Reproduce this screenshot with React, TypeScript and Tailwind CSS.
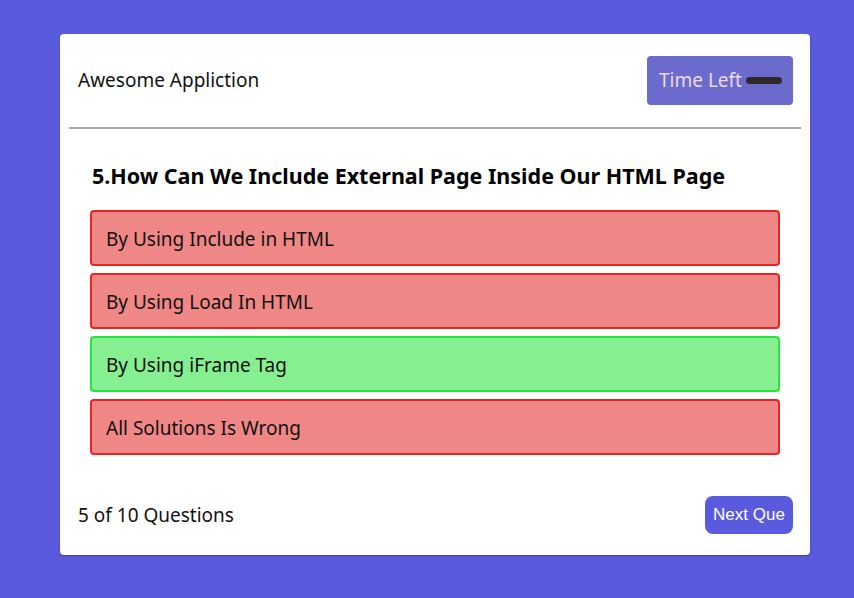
import React from "react";

const options = [
  { text: "By Using Include in HTML", correct: false },
  { text: "By Using Load In HTML", correct: false },
  { text: "By Using iFrame Tag", correct: true },
  { text: "All Solutions Is Wrong", correct: false },
];

export default function App() {
  return (
    <div className="min-h-screen bg-[#5a5ade] flex justify-center pt-[34px] pl-[16px] font-['Noto_Sans',sans-serif]">
      <div className="w-[750px] h-[521px] bg-white rounded-[4px] shadow-[0_1px_2px_rgba(0,0,0,0.3)] flex flex-col">
        <div className="h-[93px] flex items-center justify-between pl-[18px] pr-[17px]">
          <span className="text-[19px] text-[#111]">Awesome Appliction</span>
          <div className="h-[49px] w-[146px] bg-[#6b6bce] rounded-[4px] flex items-center pl-[12px] gap-[4px] whitespace-nowrap">
            <span className="text-[19px] text-[#eed8e6]">Time Left</span>
            <span className="w-[36px] h-[7px] shrink-0 rounded-full bg-[#2e2a2c]" />
          </div>
        </div>
        <div className="mx-[9px] h-[2px] bg-[#a9a9a9]" />
        <div className="px-[30px] pt-[33px]">
          <h2 className="text-[21.5px] font-bold text-black pl-[2px] leading-[28px]">
            5.How Can We Include External Page Inside Our HTML Page
          </h2>
          <div className="mt-[20px] flex flex-col gap-[7px]">
            {options.map((o) => (
              <div
                key={o.text}
                className={
                  o.correct
                    ? "h-[56px] border-2 border-[#22e43a] bg-[#86ef92] rounded-[4px] flex items-center px-[14px] pt-[2px] text-[19px] text-[#111]"
                    : "h-[56px] border-2 border-[#ea2424] bg-[#f08787] rounded-[4px] flex items-center px-[14px] pt-[2px] text-[19px] text-[#111]"
                }
              >
                {o.text}
              </div>
            ))}
          </div>
        </div>
        <div className="flex-1 flex items-center justify-between pl-[18px] pr-[17px] pt-[20px]">
          <span className="text-[19px] text-[#111]">5 of 10 Questions</span>
          <button className="h-[38px] w-[88px] rounded-[8px] bg-[#5a5ade] text-white text-[17px] font-['Liberation_Sans',Arial,sans-serif]">
            Next Que
          </button>
        </div>
      </div>
    </div>
  );
}
